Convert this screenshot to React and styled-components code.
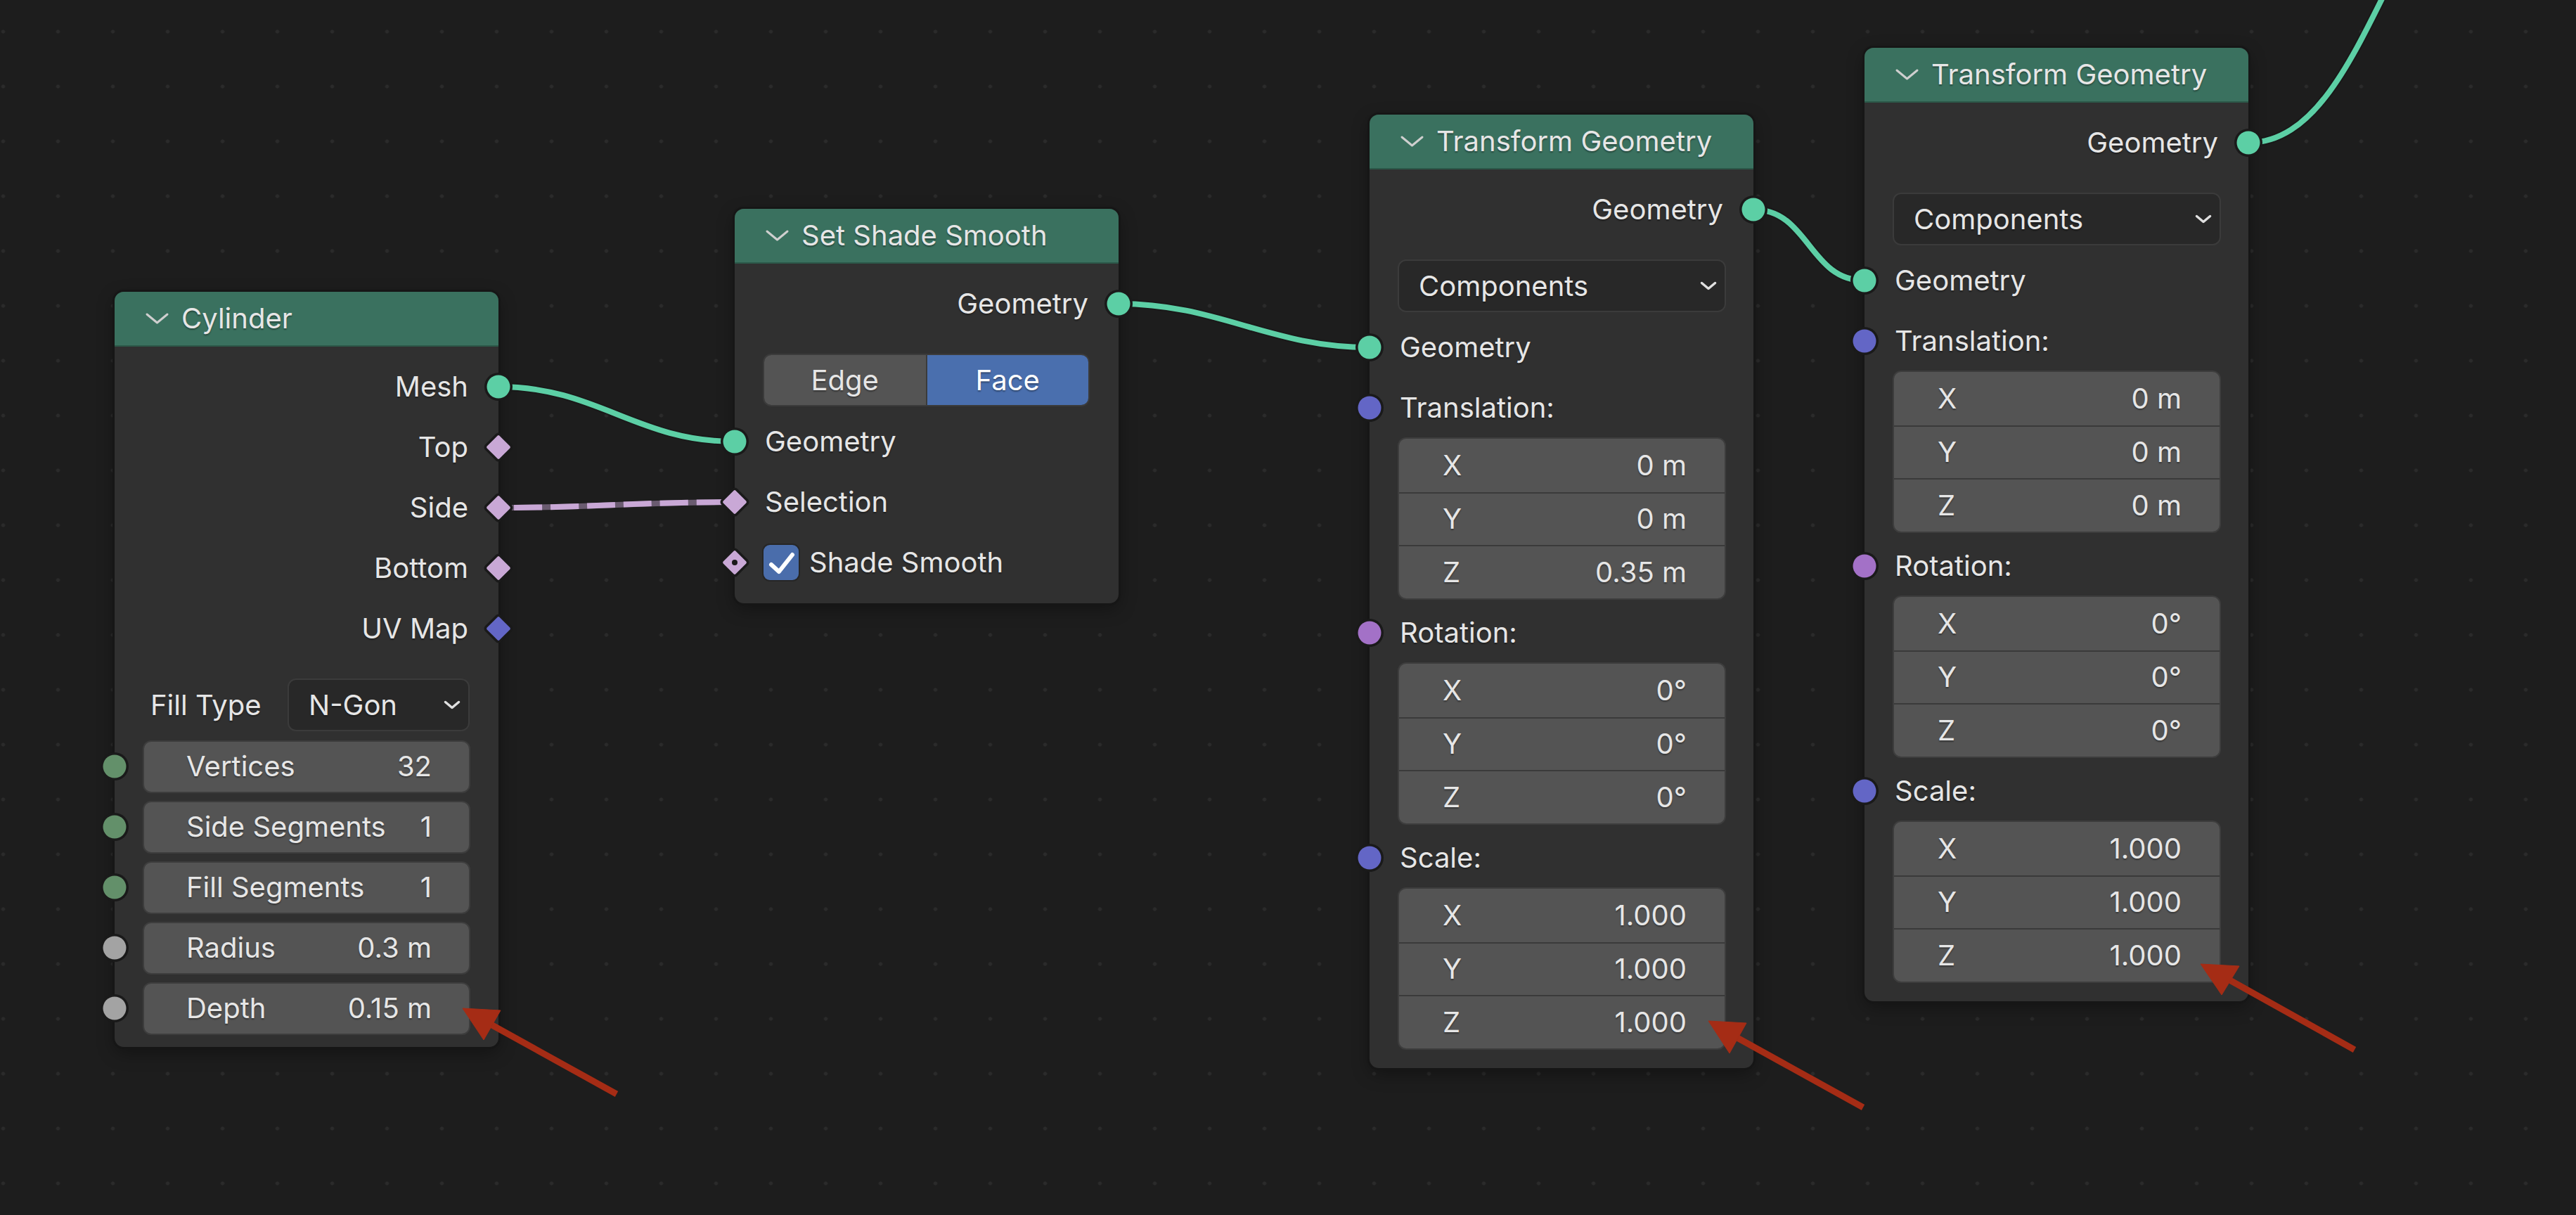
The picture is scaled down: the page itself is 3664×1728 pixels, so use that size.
import { createGlobalStyle, styled } from "styled-components";

const SOCKET = {
  geo: "#5ccfa5",
  int: "#63906a",
  float: "#a3a3a3",
  vec: "#6366c6",
  rot: "#a371c7",
  bool: "#c9a8d6",
};

const GlobalStyle = createGlobalStyle`
  html, body {
    margin: 0;
    padding: 0;
    background: #1d1d1d;
  }
  body {
    font-family: Inter, "Noto Sans", sans-serif;
  }
`;

const Canvas = styled.div`
  position: relative;
  width: 3664px;
  height: 1728px;
  overflow: hidden;
  background-color: #1d1d1d;
  background-image: radial-gradient(circle at center, #2b2b2b 0, #2b2b2b 2.3px, transparent 3px);
  background-size: 78px 78px;
  background-position: -34.5px 6px;
`;

const Layer = styled.svg`
  position: absolute;
  left: 0;
  top: 0;
  z-index: ${(p) => p.$z};
  pointer-events: none;
`;

const NodeBox = styled.div`
  position: absolute;
  z-index: 1;
  left: ${(p) => p.$x}px;
  top: ${(p) => p.$y}px;
  width: 546px;
  background: #303030;
  border-radius: 13px;
  box-shadow: 0 0 0 3px #161616, 0 8px 24px rgba(0, 0, 0, 0.35);
  color: #e6e6e6;
  font-size: 40px;
  line-height: 1;
  text-shadow: 0 2px 2px rgba(0, 0, 0, 0.35);
  white-space: nowrap;
`;

const Header = styled.div`
  box-sizing: border-box;
  height: 78px;
  display: flex;
  align-items: center;
  gap: 17px;
  padding-left: 43px;
  background: #3a715f;
  border-bottom: 2px solid #2c5849;
  border-radius: 13px 13px 0 0;
`;

const Body = styled.div`
  padding: 14px 0 ${(p) => p.$pb}px;
`;

const Row = styled.div`
  position: relative;
  height: 86px;
  display: flex;
  align-items: center;
  justify-content: ${(p) => (p.$out ? "flex-end" : "flex-start")};
  gap: 15px;
  padding: 0 43px 0 ${(p) => p.$pl ?? 43}px;
`;

const Pin = styled.span`
  position: absolute;
  top: 50%;
  ${(p) => (p.$out ? "right: 0;" : "left: 0;")}
  width: 0;
  height: 0;
  &::before {
    content: "";
    position: absolute;
    left: 0;
    top: 0;
    width: ${(p) => (p.$diamond ? 25 : 33)}px;
    height: ${(p) => (p.$diamond ? 25 : 33)}px;
    transform: translate(-50%, -50%) ${(p) => (p.$diamond ? "rotate(45deg)" : "")};
    border-radius: ${(p) => (p.$diamond ? "2px" : "50%")};
    background: ${(p) => p.$color};
    box-shadow: 0 0 0 3.5px #1a1a1a;
  }
  &::after {
    content: "";
    display: ${(p) => (p.$dot ? "block" : "none")};
    position: absolute;
    left: 0;
    top: 0;
    width: 8px;
    height: 8px;
    border-radius: 50%;
    transform: translate(-50%, -50%);
    background: #1a1a1a;
  }
`;

const Select = styled.div`
  box-sizing: border-box;
  height: 75px;
  width: ${(p) => (p.$w ? `${p.$w}px` : "auto")};
  margin: ${(p) => p.$m || "0"};
  display: flex;
  align-items: center;
  justify-content: space-between;
  padding: 0 10px 0 28px;
  background: #282828;
  border: 2px solid #3b3b3b;
  border-radius: 12px;
`;

const PropRow = styled.div`
  height: 75px;
  margin: 28px 41px 7px 51px;
  display: flex;
  align-items: center;
  justify-content: space-between;
`;

const Segmented = styled.div`
  box-sizing: border-box;
  height: 75px;
  margin: 28px 41px 7px 40px;
  display: flex;
  border: 2px solid #3b3b3b;
  border-radius: 12px;
  overflow: hidden;
`;

const Segment = styled.div`
  flex: 1;
  display: flex;
  align-items: center;
  justify-content: center;
  background: ${(p) => (p.$on ? "#4a6fae" : "#545454")};
  color: ${(p) => (p.$on ? "#ffffff" : "#e6e6e6")};
  & + & {
    border-left: 2px solid #3b3b3b;
  }
`;

const Check = styled.span`
  width: 50px;
  height: 50px;
  flex: none;
  display: flex;
  align-items: center;
  justify-content: center;
  background: #4a6dab;
  border-radius: 9px;
  box-shadow: 0 0 0 2px #262626;
`;

const FieldRow = styled.div`
  position: relative;
  height: 86px;
  display: flex;
  align-items: center;
  padding: 0 40px;
`;

const Field = styled.div`
  box-sizing: border-box;
  flex: 1;
  height: 75px;
  display: flex;
  align-items: center;
  justify-content: space-between;
  padding: 0 53px 0 60px;
  background: #545454;
  border: 2px solid #3d3d3d;
  border-radius: 12px;
`;

const VectorBlock = styled.div`
  margin: -1px 39px 4px 40px;
  background: #545454;
  border: 2px solid #3d3d3d;
  border-radius: 12px;
  overflow: hidden;
`;

const VectorCell = styled.div`
  box-sizing: border-box;
  height: 75.67px;
  display: flex;
  align-items: center;
  justify-content: space-between;
  padding: 0 54px 0 62px;
  & + & {
    border-top: 2px solid #3a3a3a;
  }
`;

const Chevron = ({ w = 35, h = 18, color = "#cfcfcf", sw = 3 }) => (
  <svg width={w} height={h} viewBox={`0 0 ${w} ${h}`} style={{ flex: "none" }}>
    <polyline
      points={`${sw},${sw} ${w / 2},${h - sw} ${w - sw},${sw}`}
      fill="none"
      stroke={color}
      strokeWidth={sw}
      strokeLinecap="round"
      strokeLinejoin="round"
    />
  </svg>
);

const Node = ({ x, y, title, pb, children }) => (
  <NodeBox $x={x} $y={y}>
    <Header>
      <Chevron />
      <span>{title}</span>
    </Header>
    <Body $pb={pb}>{children}</Body>
  </NodeBox>
);

const Output = ({ label, color, diamond }) => (
  <Row $out>
    <span>{label}</span>
    <Pin $out $color={color} $diamond={diamond} />
  </Row>
);

const Input = ({ label, color, diamond, dot, children, pl }) => (
  <Row $pl={pl}>
    <Pin $color={color} $diamond={diamond} $dot={dot} />
    {children}
    <span>{label}</span>
  </Row>
);

const ValueField = ({ label, value, color }) => (
  <FieldRow>
    <Pin $color={color} />
    <Field>
      <span>{label}</span>
      <span>{value}</span>
    </Field>
  </FieldRow>
);

const Vector = ({ values }) => (
  <VectorBlock>
    {["X", "Y", "Z"].map((axis, i) => (
      <VectorCell key={axis}>
        <span>{axis}</span>
        <span>{values[i]}</span>
      </VectorCell>
    ))}
  </VectorBlock>
);

const TransformNode = ({ x, y, translation }) => (
  <Node x={x} y={y} title="Transform Geometry" pb={22}>
    <Output label="Geometry" color={SOCKET.geo} />
    <Select $m="28px 39px 7px 40px">
      <span>Components</span>
      <Chevron w={26} h={15} color="#e0e0e0" sw={3.5} />
    </Select>
    <Input label="Geometry" color={SOCKET.geo} />
    <Input label="Translation:" color={SOCKET.vec} />
    <Vector values={translation} />
    <Input label="Rotation:" color={SOCKET.rot} />
    <Vector values={["0°", "0°", "0°"]} />
    <Input label="Scale:" color={SOCKET.vec} />
    <Vector values={["1.000", "1.000", "1.000"]} />
  </Node>
);

const wire = (x1, y1, x2, y2, k = 0.45) => {
  const d = Math.abs(x2 - x1) * k;
  return `M${x1},${y1} C${x1 + d},${y1} ${x2 - d},${y2} ${x2},${y2}`;
};

const links = [
  wire(709, 550, 1045, 628, 0.42),
  wire(1591, 432, 1948, 494, 0.4),
  wire(2494, 298, 2652, 399, 0.5),
  "M3198,203 C3292,203 3345,85 3402,-30",
];

const arrows = [
  { tip: [658, 1434], a: [712, 1437], b: [688, 1479], tail: [877, 1556] },
  { tip: [2430, 1452], a: [2484, 1455], b: [2460, 1498], tail: [2650, 1575] },
  { tip: [3130, 1371], a: [3185, 1374], b: [3160, 1415], tail: [3349, 1493] },
];

export default function App() {
  return (
    <>
      <GlobalStyle />
      <Canvas>
        <Layer $z={0} width="3664" height="1728" viewBox="0 0 3664 1728">
          {links.map((d, i) => (
            <g key={i} fill="none">
              <path d={d} stroke="#151515" strokeOpacity="0.5" strokeWidth="12" />
              <path d={d} stroke={SOCKET.geo} strokeWidth="8" />
            </g>
          ))}
          <g fill="none">
            <path d={wire(709, 722, 1045, 714, 0.4)} stroke="#6a5b70" strokeWidth="8" />
            <path
              d={wire(709, 722, 1045, 714, 0.4)}
              stroke={SOCKET.bool}
              strokeWidth="8"
              strokeDasharray="40 12"
              strokeDashoffset="-22"
            />
          </g>
        </Layer>

        <Node x={163} y={415} title="Cylinder" pb={12}>
          <Output label="Mesh" color={SOCKET.geo} />
          <Output label="Top" color={SOCKET.bool} diamond />
          <Output label="Side" color={SOCKET.bool} diamond />
          <Output label="Bottom" color={SOCKET.bool} diamond />
          <Output label="UV Map" color={SOCKET.vec} diamond />
          <PropRow>
            <span>Fill Type</span>
            <Select $w={259}>
              <span>N-Gon</span>
              <Chevron w={26} h={15} color="#e0e0e0" sw={3.5} />
            </Select>
          </PropRow>
          <ValueField label="Vertices" value="32" color={SOCKET.int} />
          <ValueField label="Side Segments" value="1" color={SOCKET.int} />
          <ValueField label="Fill Segments" value="1" color={SOCKET.int} />
          <ValueField label="Radius" value="0.3 m" color={SOCKET.float} />
          <ValueField label="Depth" value="0.15 m" color={SOCKET.float} />
        </Node>

        <Node x={1045} y={297} title="Set Shade Smooth" pb={15}>
          <Output label="Geometry" color={SOCKET.geo} />
          <Segmented>
            <Segment>Edge</Segment>
            <Segment $on>Face</Segment>
          </Segmented>
          <Input label="Geometry" color={SOCKET.geo} />
          <Input label="Selection" color={SOCKET.bool} diamond />
          <Input label="Shade Smooth" color={SOCKET.bool} diamond dot pl={41}>
            <Check>
              <svg width="50" height="50" viewBox="0 0 50 50">
                <polyline
                  points="11,28 22,38 41,14"
                  fill="none"
                  stroke="#ffffff"
                  strokeWidth="6"
                  strokeLinecap="round"
                  strokeLinejoin="round"
                />
              </svg>
            </Check>
          </Input>
        </Node>

        <TransformNode x={1948} y={163} translation={["0 m", "0 m", "0.35 m"]} />
        <TransformNode x={2652} y={68} translation={["0 m", "0 m", "0 m"]} />

        <Layer $z={2} width="3664" height="1728" viewBox="0 0 3664 1728">
          {arrows.map(({ tip, a, b, tail }, i) => (
            <g key={i} fill="#a52c15" stroke="#a52c15">
              <line
                x1={tail[0]}
                y1={tail[1]}
                x2={(a[0] + b[0]) / 2}
                y2={(a[1] + b[1]) / 2}
                strokeWidth="9"
              />
              <polygon points={`${tip.join(",")} ${a.join(",")} ${b.join(",")}`} strokeWidth="1" />
            </g>
          ))}
        </Layer>
      </Canvas>
    </>
  );
}
